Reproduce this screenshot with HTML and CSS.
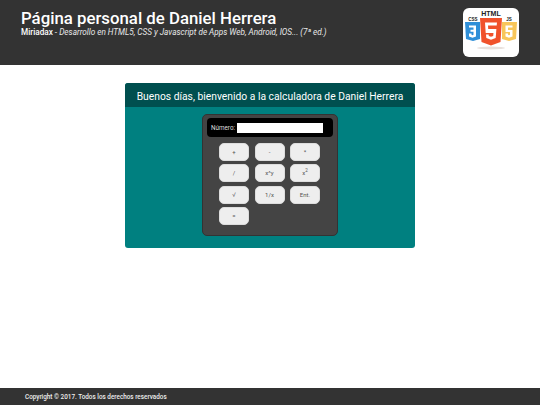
FILE: index.html
```html
<!DOCTYPE html>
<html lang="es">
<head>
<meta charset="utf-8">
<title>Calculadora</title>
<link rel="stylesheet" href="styles.css">
</head>
<body>
<header class="top">
  <div class="top-text">
    <h1>Página personal de Daniel Herrera</h1>
    <p><b>Miriadax</b> - <i>Desarrollo en HTML5, CSS y Javascript de Apps Web, Android, IOS... (7ª ed.)</i></p>
  </div>
  <div class="logo">
    <svg width="56" height="49" viewBox="0 0 56 49">
      <text x="28" y="7.500" class="lt lt-h">HTML</text>
      <text x="10" y="12.500" class="lt">CSS</text>
      <text x="46" y="12.500" class="lt">JS</text>
      <ellipse cx="28" cy="40" rx="14" ry="1.500" fill="#e8e0dc"/>
      <path d="M2 14h15v17l-7 2-7-2z" fill="#2f8fd8"/>
      <path d="M39 14h15l-1 17-7 2-7-2z" fill="#f8c65a"/>
      <path d="M6 17.500h7v11l-3.500 1.300-3.500-1.300v-3h2.500v1.300l1 .4 1-.4v-3h-3v-2h3v-2.300h-4.500z" fill="#fff"/>
      <path d="M42.500 17.500h7v2h-4.500v2.500h4.500v6.500l-3.500 1.300-3.500-1.300v-3h2.500v1.300l1 .4 1-.4v-2.800h-4.500z" fill="#fff"/>
      <path d="M17 10h22l-1.500 24-9.500 3.500-9.500-3.500z" fill="#f0512a"/>
      <path d="M22 14.500h12l-.3 3h-8.700l.2 3.500h8.200l-.7 9-4.700 1.700-4.700-1.700-.3-3.500h2.700l.1 1.500 2.200.7 2.200-.7.3-3h-7.800z" fill="#fff"/>
    </svg>
  </div>
</header>
<main class="page">
  <section class="card">
    <h2>Buenos días, bienvenido a la calculadora de Daniel Herrera</h2>
    <div class="card-body">
      <div class="calc">
        <div class="display">
          <label for="n">Número:</label>
          <input id="n" type="text">
        </div>
        <div class="keys">
          <button>+</button><button>-</button><button>*</button>
          <button>/</button><button>x^y</button><button>x<sup>2</sup></button>
          <button>√</button><button>1/x</button><button>Ent.</button>
          <button>=</button>
        </div>
      </div>
    </div>
  </section>
</main>
<footer class="bottom">Copyright © 2017. Todos los derechos reservados</footer>
</body>
</html>
```

FILE: styles.css
```css
* { box-sizing: border-box; }
html, body { height: 100%; }
body {
  margin: 0;
  height: 405px;
  display: flex;
  flex-direction: column;
  background: #fff;
  font-family: Roboto, "Liberation Sans", sans-serif;
}
.top {
  height: 65px;
  flex: none;
  background: #333;
  color: #fff;
  display: flex;
  justify-content: space-between;
  padding: 8px 21px 0 21px;
}
.top h1 {
  margin: 0;
  font-size: 16.800px;
  line-height: 20px;
  font-weight: 500;
}
.top p {
  margin: 0;
  font-size: 8.200px;
  line-height: 9px;
  color: #e8e8e8;
}
.top p b { font-weight: 500; color: #fff; }
.logo {
  width: 56px;
  height: 49px;
  background: #fff;
  border-radius: 6px;
  overflow: hidden;
}
.logo svg { display: block; }
.lt {
  font-family: "Liberation Sans", sans-serif;
  font-size: 4.500px;
  font-weight: 700;
  fill: #222;
  text-anchor: middle;
}
.lt-h { font-size: 7px; }
.page {
  flex: 1;
  padding-top: 18px;
  display: flex;
  justify-content: center;
  align-items: flex-start;
}
.card {
  width: 290px;
  height: 165px;
  background: #008080;
  border-radius: 3px;
  overflow: hidden;
}
.card h2 {
  margin: 0;
  height: 24px;
  background: #004f4f;
  color: #fff;
  font-size: 10.300px;
  line-height: 28px;
  font-weight: 400;
  text-align: center;
  white-space: nowrap;
}
.card-body {
  display: flex;
  justify-content: center;
  padding-top: 7px;
}
.calc {
  width: 136px;
  height: 122px;
  background: #444;
  border: 1px solid #333;
  border-radius: 5px;
  padding: 3px 4px 0;
}
.display {
  height: 19px;
  background: #000;
  border-radius: 4px;
  display: flex;
  align-items: center;
  padding-left: 4px;
  color: #ddd;
  font-size: 6.300px;
}
.display label { width: 26px; white-space: nowrap; }
.display input {
  width: 86px;
  height: 10px;
  padding: 0;
  border: 0;
  background: #fff;
}
.keys {
  display: grid;
  grid-template-columns: repeat(3, 30px);
  grid-auto-rows: 18px;
  column-gap: 5.500px;
  row-gap: 3.300px;
  margin: 6px 0 0 12px;
}
.keys button {
  padding: 0;
  border: 1px solid #ddd;
  border-radius: 5px;
  background: #eee;
  color: #555;
  font-family: inherit;
  font-size: 6px;
  line-height: 1;
}
.keys sup { font-size: 4.500px; line-height: 0; }
.bottom {
  height: 17px;
  flex: none;
  background: #333;
  color: #eee;
  font-size: 6.350px;
  font-weight: 500;
  line-height: 18px;
  padding-left: 25px;
}
```
